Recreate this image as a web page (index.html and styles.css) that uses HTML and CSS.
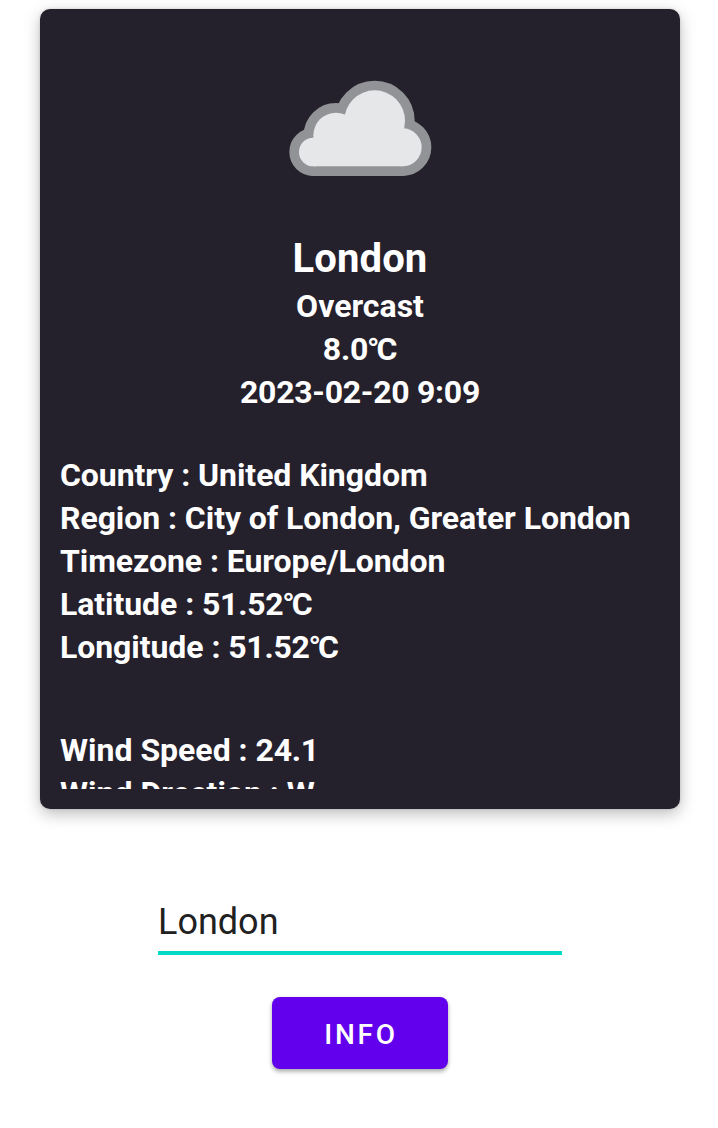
FILE: index.html
```html
<!DOCTYPE html>
<html lang="en">
<head>
<meta charset="utf-8">
<title>Weather</title>
<link rel="stylesheet" href="styles.css">
</head>
<body>
<main class="screen">
  <section class="card">
    <div class="card-content">
      <svg class="cloud" viewBox="0 0 540 420" aria-hidden="true">
        <g class="cloud-outline">
          <circle cx="130" cy="276" r="43"/><circle cx="198" cy="226" r="68"/>
          <circle cx="314" cy="182" r="91"/><circle cx="398" cy="262" r="57"/>
          <path d="M130 240H398V319H130Z"/>
        </g>
        <g class="cloud-fill">
          <circle cx="130" cy="276" r="43"/><circle cx="198" cy="226" r="68"/>
          <circle cx="314" cy="182" r="91"/><circle cx="398" cy="262" r="57"/>
          <path d="M130 232H398V319H130Z"/>
        </g>
      </svg>
      <div class="summary">
        <h1 class="city">London</h1>
        <p>Overcast</p>
        <p class="numeric">8.0<span class="degree">°</span>C</p>
        <p class="numeric">2023-02-20 9:09</p>
      </div>
      <div class="place">
        <p>Country : United Kingdom</p>
        <p>Region : City of London, Greater London</p>
        <p>Timezone : Europe/London</p>
        <p>Latitude : <span class="numeric">51.52<span class="degree">°</span>C</span></p>
        <p>Longitude : <span class="numeric">51.52<span class="degree">°</span>C</span></p>
      </div>
      <div class="wind">
        <p>Wind Speed : <span class="numeric">24.1</span></p>
        <p>Wind Drection : W</p>
      </div>
    </div>
  </section>
  <input class="search" type="text" value="London" aria-label="City">
  <button class="info" type="button">INFO</button>
</main>
</body>
</html>
```
FILE: styles.css
```css
* { box-sizing: border-box; }
html { overflow: hidden; }
body {
  margin: 0;
  background: #fff;
  font-family: Roboto, "Noto Sans", sans-serif;
}
.screen {
  width: 720px;
  height: 1128px;
  padding-top: 9px;
  display: flex;
  flex-direction: column;
  align-items: center;
}
.card {
  flex: none;
  width: 640px;
  height: 800px;
  padding: 20px;
  border-radius: 10px;
  background: #25212c;
  box-shadow: 0 5px 16px rgba(0, 0, 0, .26), 0 0 3px rgba(0, 0, 0, .15);
}
.card-content {
  height: 760px;
  overflow: hidden;
  display: flex;
  flex-direction: column;
  color: #fff;
  font-size: 32px;
  font-weight: 700;
  line-height: 43px;
}
.card-content > * { flex: none; }
.card-content p { margin: 0; white-space: nowrap; }
.cloud {
  width: 180px;
  height: 140px;
  margin: 31px auto;
  filter: blur(.6px);
}
.cloud-outline { fill: #919396; stroke: #919396; stroke-width: 58; stroke-linejoin: round; }
.cloud-fill { fill: #e6e7e9; }
.summary { text-align: center; }
.city {
  margin: 0;
  padding-top: 1px;
  font-size: 40px;
  line-height: 53px;
  letter-spacing: .1px;
}
.numeric { letter-spacing: -.28px; }
.degree { letter-spacing: -3px; margin-left: -1px; }
.place { margin-top: 40px; letter-spacing: -.065px; }
.wind { margin-top: 60px; }
.search {
  flex: none;
  width: 404px;
  height: 66px;
  margin-top: 80px;
  padding: 4px 0 0;
  border: 0;
  border-bottom: 4px solid #03dac5;
  border-radius: 0;
  outline: 0;
  background: transparent;
  color: #212121;
  font: 400 36px/48px Roboto, sans-serif;
}
.info {
  flex: none;
  width: 176px;
  height: 72px;
  margin-top: 42px;
  padding: 4px 0 0 2px;
  border: 0;
  border-radius: 8px;
  background: #6200ee;
  box-shadow: 0 3px 4px rgba(0, 0, 0, .25), 0 1px 4px rgba(0, 0, 0, .12);
  color: #fff;
  font: 500 28px/38px Roboto, sans-serif;
  letter-spacing: 2.7px;
}
```
